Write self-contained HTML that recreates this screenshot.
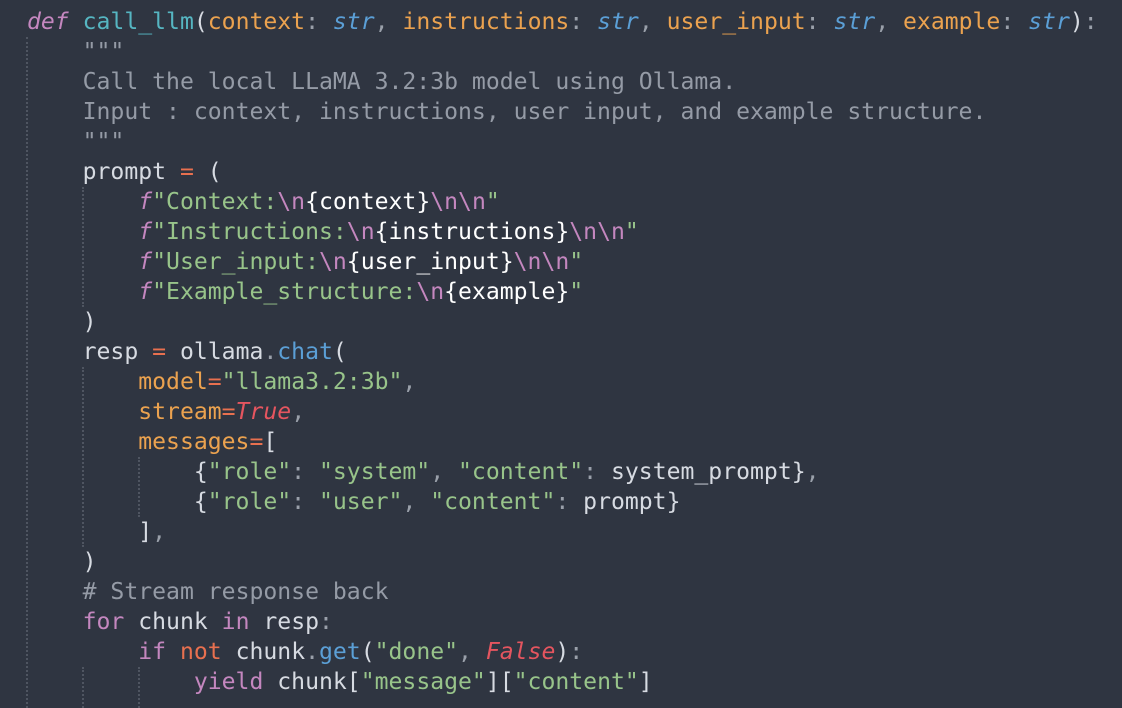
<!DOCTYPE html>
<html><head><meta charset="utf-8"><style>
html,body{margin:0;padding:0;background:#2f3541;width:1122px;height:708px;overflow:hidden}
pre{position:absolute;left:27px;top:7px;margin:0;font-family:"DejaVu Sans Mono","Liberation Mono",monospace;font-size:23.1px;line-height:30px;color:#d7dbe2;white-space:pre}
.k{color:#c487bf}.ki{color:#c487bf;font-style:italic}.fn{color:#56b6c2}.p{color:#eba24f}.t{color:#5b9fd6;font-style:italic}
.s{color:#98c48a}.e{color:#c487bf}.o{color:#e8704f}.c{color:#959ba6}.pu{color:#9aa0aa}
.r{color:#e5555f;font-style:italic}.m{color:#5b9fd6}.w{color:#ffffff}
.g{position:absolute;width:0;border-left:2px dotted #4f5561}
</style></head><body>
<div class="g" style="left:26px;top:37px;height:671px"></div>
<div class="g" style="left:82px;top:187px;height:120px"></div>
<div class="g" style="left:82px;top:367px;height:180px"></div>
<div class="g" style="left:82px;top:667px;height:41px"></div>
<div class="g" style="left:138px;top:457px;height:60px"></div>
<div class="g" style="left:138px;top:667px;height:41px"></div>
<pre><span class="ki">def</span> <span class="fn">call_llm</span>(<span class="p">context</span><span class="pu">:</span> <span class="t">str</span><span class="pu">,</span> <span class="p">instructions</span><span class="pu">:</span> <span class="t">str</span><span class="pu">,</span> <span class="p">user_input</span><span class="pu">:</span> <span class="t">str</span><span class="pu">,</span> <span class="p">example</span><span class="pu">:</span> <span class="t">str</span>)<span class="pu">:</span>
    <span class="c">"""</span>
    <span class="c">Call the local LLaMA 3.2:3b model using Ollama.</span>
    <span class="c">Input : context, instructions, user input, and example structure.</span>
    <span class="c">"""</span>
    prompt <span class="o">=</span> (
        <span class="ki">f</span><span class="s">"Context:</span><span class="e">\n</span><span class="w">{context}</span><span class="e">\n\n</span><span class="s">"</span>
        <span class="ki">f</span><span class="s">"Instructions:</span><span class="e">\n</span><span class="w">{instructions}</span><span class="e">\n\n</span><span class="s">"</span>
        <span class="ki">f</span><span class="s">"User_input:</span><span class="e">\n</span><span class="w">{user_input}</span><span class="e">\n\n</span><span class="s">"</span>
        <span class="ki">f</span><span class="s">"Example_structure:</span><span class="e">\n</span><span class="w">{example}</span><span class="s">"</span>
    )
    resp <span class="o">=</span> ollama<span class="pu">.</span><span class="m">chat</span>(
        <span class="p">model</span><span class="o">=</span><span class="s">"llama3.2:3b"</span><span class="pu">,</span>
        <span class="p">stream</span><span class="o">=</span><span class="r">True</span><span class="pu">,</span>
        <span class="p">messages</span><span class="o">=</span>[
            {<span class="s">"role"</span><span class="pu">:</span> <span class="s">"system"</span><span class="pu">,</span> <span class="s">"content"</span><span class="pu">:</span> system_prompt}<span class="pu">,</span>
            {<span class="s">"role"</span><span class="pu">:</span> <span class="s">"user"</span><span class="pu">,</span> <span class="s">"content"</span><span class="pu">:</span> prompt}
        ]<span class="pu">,</span>
    )
    <span class="c"># Stream response back</span>
    <span class="k">for</span> chunk <span class="k">in</span> resp<span class="pu">:</span>
        <span class="k">if</span> <span class="o">not</span> chunk<span class="pu">.</span><span class="m">get</span>(<span class="s">"done"</span><span class="pu">,</span> <span class="r">False</span>)<span class="pu">:</span>
            <span class="k">yield</span> chunk[<span class="s">"message"</span>][<span class="s">"content"</span>]</pre>
</body></html>
